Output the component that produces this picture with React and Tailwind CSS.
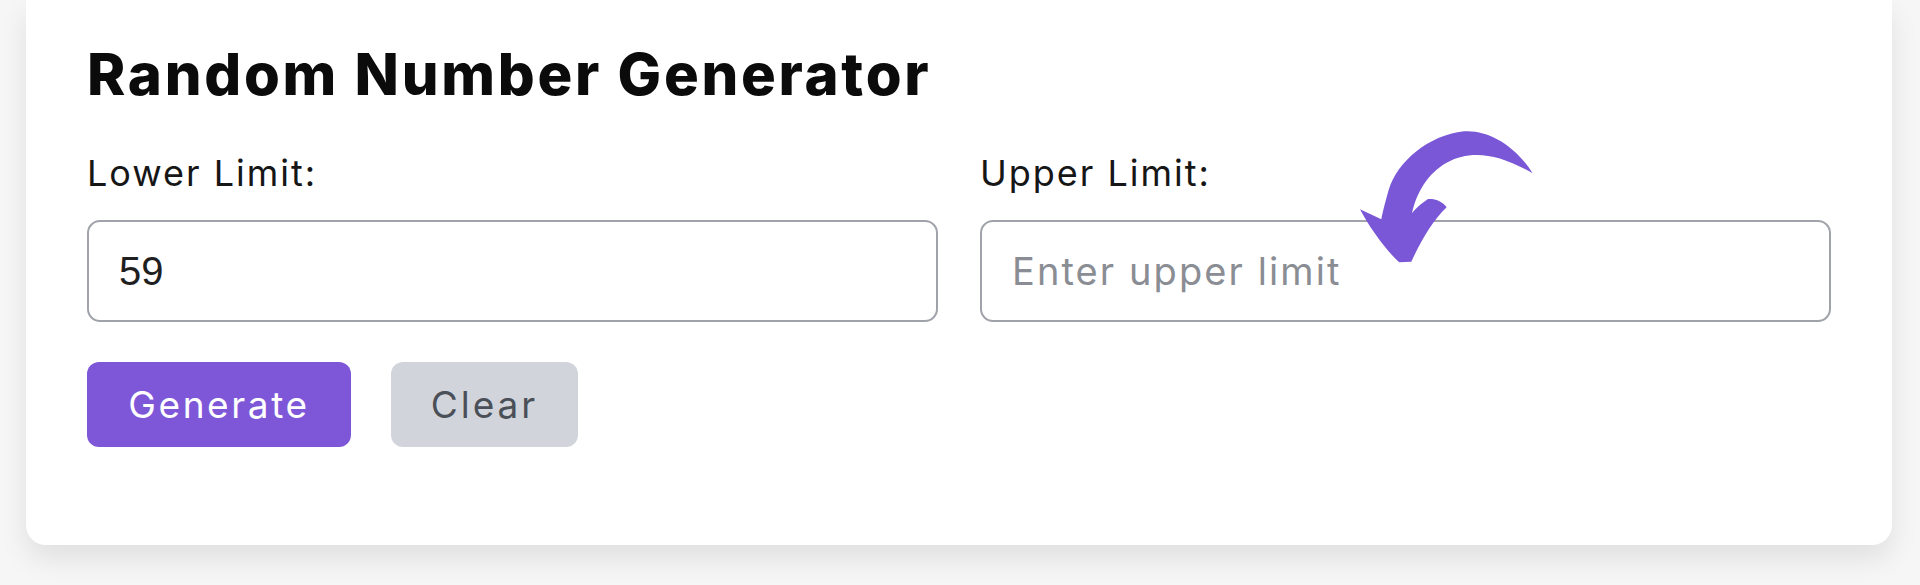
import React, { useState } from "react";

const CurvedArrow = () => (
  <svg
    viewBox="0 0 660 480"
    className="absolute left-[360px] top-[-31px] w-[220px] h-[160px] pointer-events-none"
  >
    <path
      d="M578,160 C525,74 440,28 372,34 C265,46 172,125 146,210 C136,245 128,275 124,298 L60,268 C88,322 140,394 178,427 L214,425 C244,360 280,300 320,262 C306,242 282,235 264,237 C244,250 226,266 216,280 C228,222 262,160 320,128 C390,90 472,98 578,160 Z"
      fill="#7a57d6"
    />
  </svg>
);

const Field = ({ label, value, placeholder, onChange, children }) => (
  <div className="relative flex flex-col">
    <label className="text-[36px] leading-[44px] text-[#161616] tracking-[0.055em]">
      {label}
    </label>
    <input
      type="text"
      value={value}
      onChange={onChange}
      placeholder={placeholder}
      className="mt-[25px] h-[102px] w-full rounded-[13px] border-2 border-[#a0a3aa] bg-white px-[30px] font-['Liberation_Sans',Arial,sans-serif] text-[40px] text-[#1f1f1f] outline-none placeholder:font-['Inter',sans-serif] placeholder:text-[38px] placeholder:tracking-[0.055em] placeholder:text-[#8a8d93]"
    />
    {children}
  </div>
);

export default function App() {
  const [lower, setLower] = useState("59");
  const [upper, setUpper] = useState("");

  return (
    <div className="min-h-screen bg-[#f6f6f6] pl-[26px] pb-[40px] font-['Inter','Noto_Sans',sans-serif]">
      <div className="w-[1866px] rounded-b-[20px] bg-white px-[61px] pt-[39px] pb-[98px] shadow-[0_14px_28px_rgba(0,0,0,0.09)]">
        <h1 className="text-[58px] leading-[70px] font-extrabold text-[#0b0b0b] tracking-[0.047em]">
          Random Number Generator
        </h1>

        <div className="mt-[42px] grid grid-cols-2 gap-[42px]">
          <Field
            label="Lower Limit:"
            value={lower}
            placeholder="Enter lower limit"
            onChange={(e) => setLower(e.target.value)}
          />
          <Field
            label="Upper Limit:"
            value={upper}
            placeholder="Enter upper limit"
            onChange={(e) => setUpper(e.target.value)}
          >
            <CurvedArrow />
          </Field>
        </div>

        <div className="mt-[40px] flex gap-[40px]">
          <button className="flex h-[85px] w-[264px] items-center justify-center rounded-[12px] bg-[#7e57d9] text-[37px] text-white tracking-[0.07em]">
            Generate
          </button>
          <button
            onClick={() => {
              setLower("");
              setUpper("");
            }}
            className="flex h-[85px] w-[187px] items-center justify-center rounded-[12px] bg-[#d1d5db] text-[37px] text-[#4b4f58] tracking-[0.08em]"
          >
            Clear
          </button>
        </div>
      </div>
    </div>
  );
}
